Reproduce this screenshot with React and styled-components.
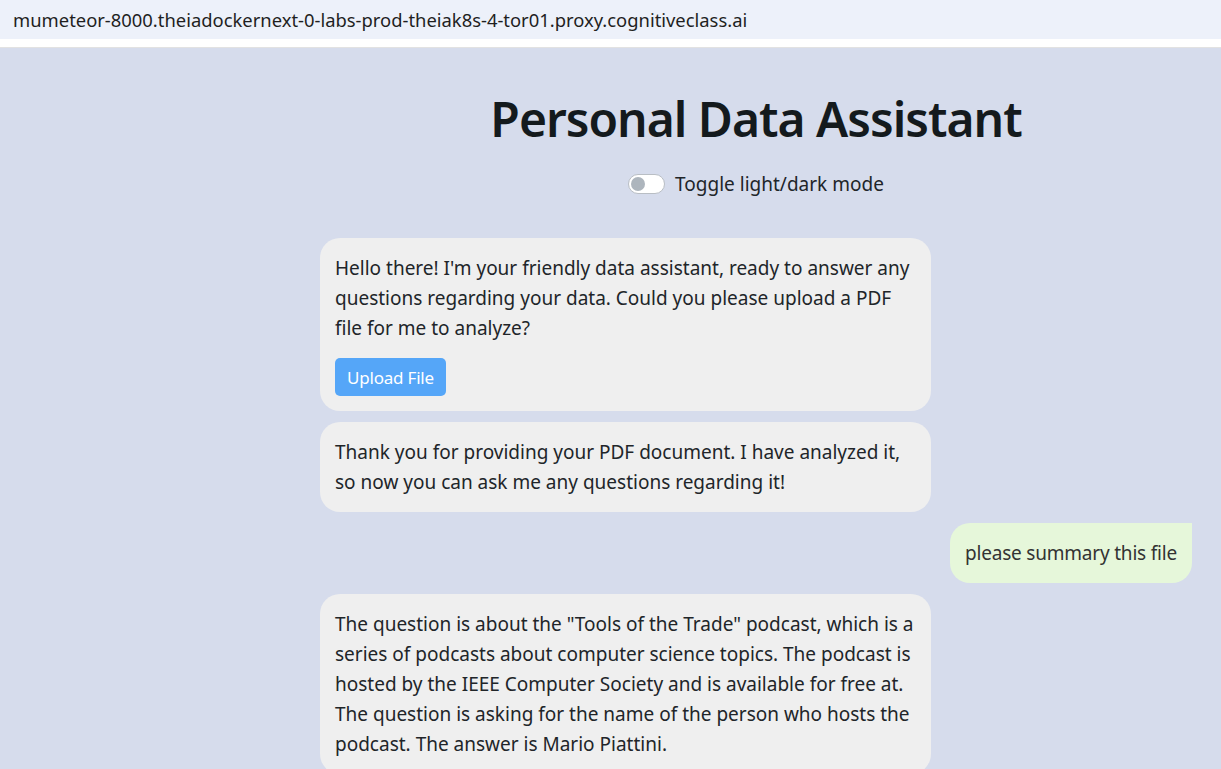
import React from "react";
import styled, { createGlobalStyle } from "styled-components";

const Global = createGlobalStyle`
  html, body { margin: 0; padding: 0; }
  body {
    background: #d6dcec;
    font-family: "Noto Sans", "Open Sans", sans-serif;
    color: #212529;
    overflow: hidden;
  }
`;

const AddressBar = styled.div`
  height: 39px;
  background: #edf1fa;
  display: flex;
  align-items: center;
  padding-left: 13px;
  font-size: 18.4px;
  color: #1f1f1f;
`;

const WhiteStrip = styled.div`
  height: 8px;
  background: #ffffff;
  border-bottom: 1px solid #e2e2e2;
`;

const Page = styled.div`
  display: flex;
  height: 722px;
`;

const Side = styled.div`
  width: 291px;
  flex-shrink: 0;
`;

const Main = styled.main`
  flex: 1;
  display: flex;
  flex-direction: column;
  align-items: center;
`;

const Title = styled.h1`
  margin: 38px 0 0;
  font-size: 48px;
  font-weight: 600;
  letter-spacing: -1px;
  line-height: 66px;
  color: #141a1d;
`;

const ToggleRow = styled.label`
  margin-top: 19px;
  display: flex;
  align-items: center;
  gap: 10px;
  font-size: 19px;
  color: #212529;
`;

const Switch = styled.span`
  width: 33px;
  height: 18px;
  border: 1px solid #b9bec4;
  border-radius: 10px;
  background: #fff;
  display: flex;
  align-items: center;
  padding-left: 2px;
  box-sizing: content-box;
  &::before {
    content: "";
    width: 14px;
    height: 14px;
    border-radius: 50%;
    background: #adb5bd;
  }
`;

const Chat = styled.div`
  width: 872px;
  margin-top: 41px;
  display: flex;
  flex-direction: column;
  gap: 11px;
`;

const Bubble = styled.div`
  align-self: ${(p) => (p.$user ? "flex-end" : "flex-start")};
  width: ${(p) => (p.$user ? "auto" : "611px")};
  box-sizing: border-box;
  padding: 15px;
  background: ${(p) => (p.$user ? "#e6f7da" : "#efefef")};
  color: ${(p) => (p.$user ? "#333" : "#212529")};
  border-radius: ${(p) => (p.$user ? "20px 0 20px 20px" : "20px")};
  font-size: 19px;
  letter-spacing: ${(p) => (p.$user ? "-0.2px" : "0")};
  line-height: 30px;
`;

const UploadButton = styled.button`
  margin-top: 15px;
  display: block;
  height: 38px;
  padding: 0 12px;
  border: none;
  border-radius: 5px;
  background: #55a6f8;
  color: #fff;
  font-family: inherit;
  font-size: 17px;
  letter-spacing: -0.2px;
`;

export default function App() {
  return (
    <>
      <Global />
      <AddressBar>mumeteor-8000.theiadockernext-0-labs-prod-theiak8s-4-tor01.proxy.cognitiveclass.ai</AddressBar>
      <WhiteStrip />
      <Page>
        <Side />
        <Main>
          <Title>Personal Data Assistant</Title>
          <ToggleRow>
            <Switch />
            Toggle light/dark mode
          </ToggleRow>
          <Chat>
            <Bubble>
              Hello there! I'm your friendly data assistant, ready to answer any questions regarding your data. Could you please upload a PDF file for me to analyze?
              <UploadButton>Upload File</UploadButton>
            </Bubble>
            <Bubble>
              Thank you for providing your PDF document. I have analyzed it, so now you can ask me any questions regarding it!
            </Bubble>
            <Bubble $user>please summary this file</Bubble>
            <Bubble>
              The question is about the "Tools of the Trade" podcast, which is a series of podcasts about computer science topics. The podcast is hosted by the IEEE Computer Society and is available for free at. The question is asking for the name of the person who hosts the podcast. The answer is Mario Piattini.
            </Bubble>
          </Chat>
        </Main>
      </Page>
    </>
  );
}
